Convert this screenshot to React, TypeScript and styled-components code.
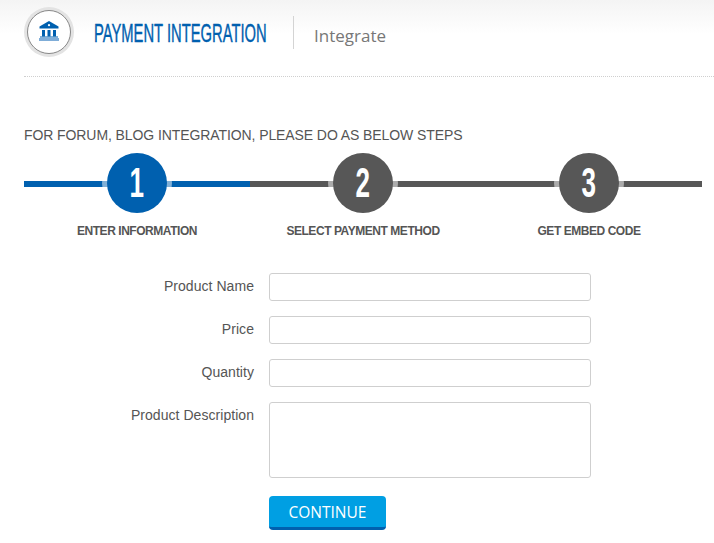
import * as React from 'react'
import styled, { createGlobalStyle } from 'styled-components'

const GlobalStyle = createGlobalStyle`
    html, body {
        margin: 0;
        padding: 0;
        background: #fff;
        font-family: "Liberation Sans", Arial, sans-serif;
    }
`

const Page = styled.div`
    width: 714px;
    height: 543px;
    overflow: hidden;
    background: linear-gradient(#f4f4f4 0, #fff 34px);
    box-sizing: border-box;
    padding-left: 24px;
`

const Header = styled.header`
    display: flex;
    align-items: center;
    height: 77px;
    padding-bottom: 12px;
    box-sizing: border-box;
    border-bottom: 1px dotted #cfcfcf;
`

const Badge = styled.div`
    width: 42px;
    height: 42px;
    margin-left: 3px;
    border-radius: 50%;
    background: #fff;
    border: 1px solid #888;
    box-shadow: 0 0 0 3px #e3e3e3;
    display: flex;
    align-items: center;
    justify-content: center;
    flex: none;

    svg {
        margin-bottom: 2px;
    }
`

const Heading = styled.h1`
    width: 174px;
    margin: 2px 0 0 23px;
    font-size: 25px;
    font-weight: 400;
    line-height: 28px;
    color: #0060af;
    white-space: nowrap;
`

const HeadingText = styled.span`
    display: inline-block;
    transform: scaleX(0.59);
    transform-origin: left center;
    -webkit-text-stroke: 0.4px #0060af;
`

const Divider = styled.div`
    width: 1px;
    height: 33px;
    margin: 0 20px 0 25px;
    background: #d4d4d4;
`

const SubHeading = styled.span`
    font-family: "Open Sans", sans-serif;
    font-size: 17px;
    color: #777;
    margin-top: 6px;
`

const Intro = styled.p`
    margin: 50px 0 0;
    font-size: 14px;
    line-height: 16px;
    letter-spacing: -0.09px;
    color: #555;
`

const Steps = styled.div`
    display: flex;
    width: 678px;
    margin-top: 10px;
`

const Step = styled.div`
    width: 226px;
    display: flex;
    flex-direction: column;
    align-items: center;
`

const Track = styled.div<{ $active?: boolean }>`
    width: 100%;
    height: 60px;
    display: flex;
    justify-content: center;
    background: linear-gradient(${(p) => (p.$active ? '#0060af' : '#575757')} 0 0) 0 28px / 100% 6px no-repeat;
`

const Circle = styled.div<{ $active?: boolean }>`
    width: 60px;
    height: 60px;
    border-radius: 50%;
    background: ${(p) => (p.$active ? '#0060af' : '#575757')};
    box-shadow: 0 0 0 5px rgba(255, 255, 255, 0.5);
    color: #fff;
    display: flex;
    align-items: center;
    justify-content: center;
    font-size: 42px;
    font-weight: 700;
`

const Digit = styled.span`
    display: block;
    transform: scaleX(0.62);
`

const StepLabel = styled.div`
    margin-top: 11px;
    font-size: 12px;
    letter-spacing: -0.45px;
    line-height: 14px;
    font-weight: 700;
    color: #555;
    white-space: nowrap;
`

const Form = styled.form`
    display: grid;
    grid-template-columns: 230px 322px;
    column-gap: 15px;
    row-gap: 15px;
    margin-top: 35px;
`

const Label = styled.label`
    text-align: right;
    font-size: 14px;
    line-height: 16px;
    letter-spacing: 0.05px;
    padding-top: 5px;
    color: #555;
`

const Input = styled.input`
    width: 100%;
    height: 28px;
    box-sizing: border-box;
    border: 1px solid #cfcfcf;
    border-radius: 3px;
    background: #fff;
    margin: 0;
    padding: 0 6px;
`

const TextArea = styled.textarea`
    display: block;
    width: 100%;
    height: 76px;
    box-sizing: border-box;
    border: 1px solid #cfcfcf;
    border-radius: 3px;
    background: #fff;
    margin: 0;
    padding: 4px 6px;
    resize: none;
`

const Button = styled.button`
    grid-column: 2;
    justify-self: start;
    width: 117px;
    height: 34px;
    margin-top: 3px;
    padding: 0;
    box-sizing: border-box;
    border: 0;
    border-bottom: 3px solid #0060af;
    border-radius: 4px;
    background: #009fe3;
    color: #fff;
    font-family: "Open Sans", sans-serif;
    font-size: 15.5px;
`

const BankIcon = () => (
    <svg width="20" height="20" viewBox="0 0 20 20">
        <path d="M10 0 L19.5 5.5 V7.5 H0.5 V5.5 Z" fill="#0060af" />
        <circle cx="10" cy="4.2" r="1.1" fill="#fff" />
        <path d="M3 9 H6 V15.5 H3 Z M8.5 9 H11.5 V15.5 H8.5 Z M14 9 H17 V15.5 H14 Z" fill="#0060af" />
        <rect x="1" y="15.5" width="18" height="1" fill="#0060af" />
        <rect x="0" y="17" width="20" height="3" fill="#7fadd8" />
    </svg>
)

const steps = [
    { number: 1, label: 'ENTER INFORMATION', active: true },
    { number: 2, label: 'SELECT PAYMENT METHOD', active: false },
    { number: 3, label: 'GET EMBED CODE', active: false },
]

const App = () => {
    return (
        <Page>
            <GlobalStyle />
            <Header>
                <Badge><BankIcon /></Badge>
                <Heading><HeadingText>PAYMENT INTEGRATION</HeadingText></Heading>
                <Divider />
                <SubHeading>Integrate</SubHeading>
            </Header>
            <Intro>FOR FORUM, BLOG INTEGRATION, PLEASE DO AS BELOW STEPS</Intro>
            <Steps>
                {steps.map(({ number, label, active }) => (
                    <Step key={number}>
                        <Track $active={active}>
                            <Circle $active={active}><Digit>{number}</Digit></Circle>
                        </Track>
                        <StepLabel>{label}</StepLabel>
                    </Step>
                ))}
            </Steps>
            <Form onSubmit={(event) => event.preventDefault()}>
                <Label>Product Name</Label>
                <Input />
                <Label>Price</Label>
                <Input />
                <Label>Quantity</Label>
                <Input />
                <Label>Product Description</Label>
                <TextArea />
                <Button>CONTINUE</Button>
            </Form>
        </Page>
    )
}

export default App
